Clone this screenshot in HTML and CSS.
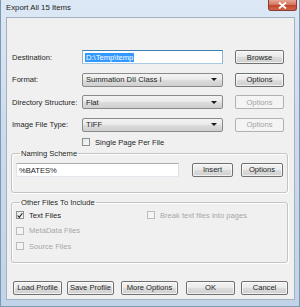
FILE: index.html
```html
<!DOCTYPE html>
<html lang="en">
<head>
    <meta charset="UTF-8">
    <title>Export All 15 Items</title>
    <link rel="stylesheet" href="styles.css">
</head>
<body>

    <div class="window">
        <div class="titlebar">
            <span class="title">Export All 15 Items</span>
            <span class="close-btn">
                <svg width="11" height="7" viewBox="0 0 11 7">
                    <path d="M2 0.5 L9 6.5 M9 0.5 L2 6.5" stroke="#fff" stroke-width="1.8"/>
                </svg>
            </span>
        </div>

        <div class="client">
            <div class="form-rows">
                <div class="form-row">
                    <span class="field-label">Destination:</span>
                    <div class="text-input field focused"><span class="selected">D:\Temp\temp</span></div>
                    <button class="btn side-btn">Browse</button>
                </div>
                <div class="form-row">
                    <span class="field-label">Format:</span>
                    <div class="combo field"><span>Summation DII Class I</span><i class="arrow"></i></div>
                    <button class="btn side-btn">Options</button>
                </div>
                <div class="form-row">
                    <span class="field-label">Directory Structure:</span>
                    <div class="combo field"><span>Flat</span><i class="arrow"></i></div>
                    <button class="btn side-btn" disabled>Options</button>
                </div>
                <div class="form-row">
                    <span class="field-label">Image File Type:</span>
                    <div class="combo field"><span>TIFF</span><i class="arrow"></i></div>
                    <button class="btn side-btn" disabled>Options</button>
                </div>
            </div>

            <div class="check single-page">
                <span class="box"></span>
                <span>Single Page Per File</span>
            </div>

            <fieldset class="group naming">
                <legend>Naming Scheme</legend>
                <div class="naming-row">
                    <div class="text-input naming-input">%BATES%</div>
                    <button class="btn insert-btn">Insert</button>
                    <button class="btn naming-opt">Options</button>
                </div>
            </fieldset>

            <fieldset class="group others">
                <legend>Other Files To Include</legend>
                <div class="others-cols">
                    <div class="others-left">
                        <div class="check">
                            <span class="box checked">
                                <svg width="7" height="7" viewBox="0 0 7 7"><path d="M0.8 3.5 L2.6 5.6 L6.3 0.9" fill="none" stroke="#1b1b1b" stroke-width="1.3"/></svg>
                            </span>
                            <span>Text Files</span>
                        </div>
                        <div class="check disabled">
                            <span class="box"></span>
                            <span>MetaData Files</span>
                        </div>
                        <div class="check disabled">
                            <span class="box"></span>
                            <span>Source Files</span>
                        </div>
                    </div>
                    <div class="others-right">
                        <div class="check disabled">
                            <span class="box"></span>
                            <span>Break text files into pages</span>
                        </div>
                    </div>
                </div>
            </fieldset>

            <div class="footer">
                <button class="btn load-btn">Load Profile</button>
                <button class="btn save-btn">Save Profile</button>
                <button class="btn more-btn">More Options</button>
                <button class="btn ok-btn">OK</button>
                <button class="btn cancel-btn">Cancel</button>
            </div>
        </div>
    </div>

</body>
</html>
```

FILE: styles.css
```css
* {
    box-sizing: border-box;
}

body {
    margin: 0;
    font-family: "Liberation Sans", Arial, sans-serif;
    font-size: 7.6px;
    color: #1e1e1e;
    background-color: #c6d7ea;
}

.window {
    width: 300px;
    height: 307px;
    padding: 0 4px 6px 5px;
    background: linear-gradient(to bottom, #dce8f5 0%, #cddcec 40%, #c0d3e8 100%);
    border-left: 1px solid #7f97b2;
    border-right: 1px solid #7f97b2;
    border-bottom: 1px solid #7f97b2;
    display: flex;
    flex-direction: column;
}

.titlebar {
    height: 17px;
    display: flex;
    align-items: flex-start;
}

.title {
    font-size: 7.8px;
    color: #1b1b1b;
    margin-top: 3px;
}

.close-btn {
    margin-left: auto;
    margin-right: -2px;
    width: 29px;
    height: 11px;
    border: 1px solid #8a3b2f;
    border-top: none;
    border-radius: 0 0 3px 3px;
    background: linear-gradient(to bottom, #e6a795 0%, #d47760 45%, #c4462d 55%, #d0674a 100%);
    display: flex;
    align-items: center;
    justify-content: center;
}

.client {
    flex: 1;
    background-color: #f0f0f0;
    border: 1px solid #a3b2c3;
    padding: 32px 0 0 4px;
}

/* --- filas principales --- */
.form-rows {
    display: flex;
    flex-direction: column;
    gap: 8.5px;
}

.form-row {
    display: flex;
    align-items: center;
    height: 14px;
}

.field-label {
    width: 71px;
    flex-shrink: 0;
    padding-left: 1px;
    white-space: nowrap;
}

.field {
    width: 141px;
    flex-shrink: 0;
}

.side-btn {
    width: 49px;
    margin-left: 12px;
    flex-shrink: 0;
}

.text-input {
    height: 14px;
    background: #fff;
    border: 1px solid #abadb3;
    border-color: #abadb3 #dbdfe6 #e3e9ef #e2e3ea;
    padding: 2px 2px;
    line-height: 9px;
    white-space: nowrap;
}

.text-input.focused {
    border-color: #3c7fb1 #8fb5d4 #a9cae3 #8fb5d4;
}

.selected {
    background: #3399ff;
    color: #fff;
    padding: 0 1px;
}

.combo {
    height: 14px;
    border: 1px solid #8a8a8a;
    border-radius: 2px;
    background: linear-gradient(to bottom, #f3f3f3 0%, #ebebeb 45%, #dddddd 50%, #cfcfcf 100%);
    display: flex;
    align-items: center;
    padding-left: 3px;
}

.combo span {
    flex: 1;
}

.arrow {
    width: 0;
    height: 0;
    border-left: 3px solid transparent;
    border-right: 3px solid transparent;
    border-top: 3px solid #1a1a1a;
    margin-right: 5px;
}

.btn {
    height: 14px;
    padding: 0;
    font-family: inherit;
    font-size: 7.6px;
    color: #1e1e1e;
    border: 1px solid #707070;
    border-radius: 2px;
    background: linear-gradient(to bottom, #f2f2f2 0%, #ebebeb 45%, #dddddd 50%, #cfcfcf 100%);
    box-shadow: inset 0 0 0 1px rgba(255, 255, 255, 0.7);
}

.btn:disabled {
    color: #a3a3a3;
    border-color: #adb2b5;
    background: #f4f4f4;
    box-shadow: none;
}

/* --- checkboxes --- */
.check {
    display: flex;
    align-items: center;
    height: 9px;
}

.box {
    width: 8px;
    height: 8px;
    border: 1px solid #8e8f8f;
    background: linear-gradient(135deg, #e4e4e4 0%, #fafafa 100%);
    margin-right: 5px;
    display: flex;
    align-items: center;
    justify-content: center;
    flex-shrink: 0;
}

.check.disabled {
    color: #a7a7a7;
}

.check.disabled .box {
    border-color: #bcbcbc;
    background: #f4f4f4;
}

.single-page {
    margin: 6px 0 0 71px;
}

/* --- grupos --- */
.group {
    margin: 2px 6px 0 0;
    border: 1px solid #c4c4c4;
    border-radius: 3px;
    box-shadow: inset 1px 1px 0 #fff, 1px 1px 0 #fff;
    padding: 0 4px;
    min-width: 0;
}

.group legend {
    padding: 0 1px;
    margin-left: 4px;
    line-height: 10px;
}

.naming {
    height: 44px;
}

.naming-row {
    display: flex;
    align-items: center;
    margin-top: 4px;
}

.naming-input {
    width: 163px;
}

.insert-btn {
    width: 41px;
    margin-left: 13px;
}

.naming-opt {
    width: 42px;
    margin-left: 8px;
}

.others {
    margin-top: 5px;
    height: 65px;
}

.others-cols {
    display: flex;
    margin-top: 3px;
}

.others-left {
    width: 131px;
    display: flex;
    flex-direction: column;
    gap: 6.5px;
}

/* --- botones inferiores --- */
.footer {
    display: flex;
    margin: 18px 0 0 2px;
}

.load-btn { width: 49px; }
.save-btn { width: 47px; margin-left: 5px; }
.more-btn { width: 57px; margin-left: 7px; }
.ok-btn { width: 49px; margin-left: 8px; }
.cancel-btn { width: 47px; margin-left: 6px; }
```
